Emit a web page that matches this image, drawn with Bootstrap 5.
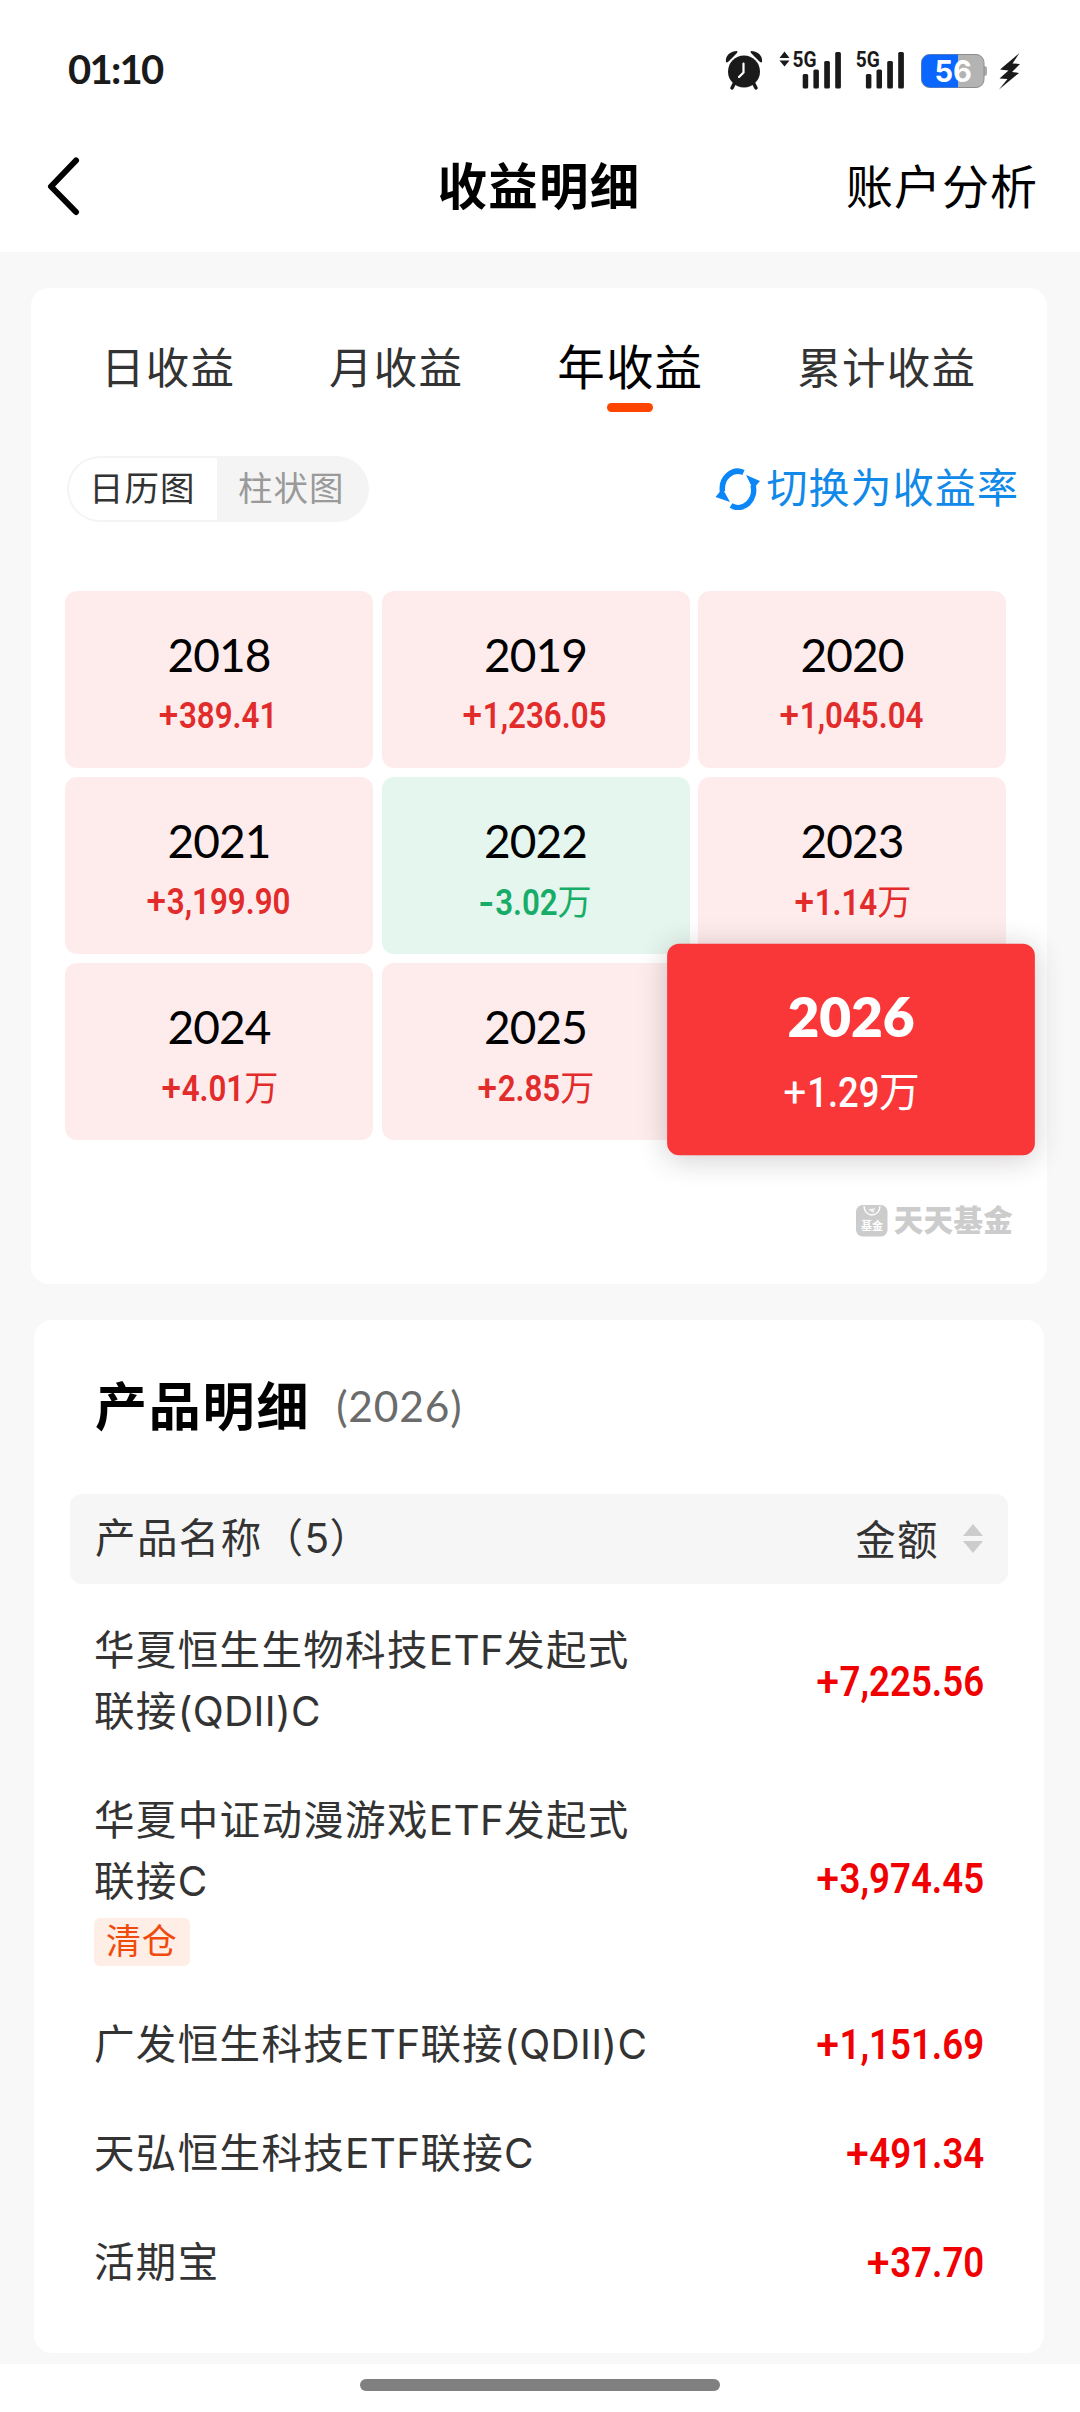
<!DOCTYPE html>
<html lang="zh-CN">
<head>
<meta charset="utf-8">
<meta name="viewport" content="width=device-width, initial-scale=1">
<title>收益明细</title>
<link href="https://cdn.jsdelivr.net/npm/bootstrap@5.3.0/dist/css/bootstrap.min.css" rel="stylesheet">
<style>
body{font-family:Lato,"Noto Sans CJK SC",sans-serif;background:#f8f8f8;color:#333;width:1080px;height:2412px;overflow:hidden}
.statusbar{height:120px;padding:25px 59px 0 68px}
.clock{font:700 40px/88px Lato,sans-serif;color:#1a1a1a;letter-spacing:-1.7px}
.statusbar svg{display:block;flex:none}
.topbar{height:132px;padding:0 42px 0 47px;color:#000}
.topbar .side{width:260px}
.topbar h1{font-size:49.5px;font-weight:700;letter-spacing:1.3px;line-height:131px;margin-left:-7px!important}
.topbar .link{font-size:47px;letter-spacing:1px;line-height:132px}
.panel{background:#fff;border-radius:18px}
.panel-cal{margin:36px 33px 0 31px;height:996px}
.tabs{gap:94px;padding:27px 0 0 70px;height:133px;font-size:43.5px;letter-spacing:1.2px;line-height:104px}
.tabs .on{font-size:47.500px;color:#000;position:relative}
.tabs .on::after{content:"";position:absolute;left:50%;bottom:9px;width:46px;height:9px;margin-left:-23px;border-radius:5px;background:#ff4400}
.switches{padding:35px 28px 0 36px;height:101px}
.seg{width:302px;height:66px;border-radius:33px;background:#f4f4f4;padding:2px;overflow:hidden;font-size:34.500px;letter-spacing:1px;line-height:59px}
.seg .on{width:148px;background:#fff;border-radius:31px 0 0 31px;padding-left:20px}
.seg .off{color:#9a9a9a;padding-left:21px}
.rate{color:#1189e8;font-size:41px;letter-spacing:1.1px;line-height:64px}
.cal{padding:69px 41px 0 34px}
.cal .d-grid{grid-template-columns:repeat(3,308px);grid-auto-rows:177px;gap:9px 8.5px}
.cell{border-radius:12px;background:#feecec;color:#e22b2b;padding-top:37px;text-align:center}
.cell .yr{font-size:46px;line-height:54px;color:#000;letter-spacing:-.9px}
.amt{font-family:Roboto,"Noto Sans CJK SC",sans-serif;font-weight:600;white-space:nowrap;display:inline-block}
.amt .sg{font-weight:500;display:inline-block;transform:scaleX(1.12);margin-right:2px}
.cell .amt{font-size:36px;line-height:44px;margin-top:12px;transform:scaleX(.87)}
.amt i{font:400 35px/40px "Noto Sans CJK SC",sans-serif;display:inline-block;transform:scaleX(1.12);margin-left:2px}
.cell.down{background:#e5f6ee;color:#17ad68}
.cell.down .sg{font-weight:700;transform:scaleX(1.35);margin-right:3px}
.cell.sel{background:#f93739;color:#fff;transform:translate(-1px,-2px) scale(1.194);border-radius:10px;padding-top:34px;box-shadow:0 3px 24px rgba(60,40,40,.24);position:relative}
.cell.sel .yr{color:#fff;font-weight:800;letter-spacing:-.1px}
.cell.sel .amt{font-weight:500;font-size:35px;margin-top:13.5px}
.cell.sel .sg{font-weight:400}
.brandmark{padding:62px 34px 0 0;height:98px;color:#ccc;font-size:29.5px;font-weight:900;letter-spacing:.3px;line-height:36px}
.panel-list{margin:36px 36px 0 34px;height:1033px}
.panel-list h2{font-size:52px;font-weight:700;color:#000;letter-spacing:1.8px;line-height:173px}
.panel-list .hd{padding-left:61px;height:174px}
.hd small.yr-note{font-size:42.5px;color:#6b6b6b;line-height:172px;margin-left:26px;letter-spacing:.8px}
.thead-bar{margin:0 36px;height:90px;border-radius:12px;background:#f6f6f6;padding:0 25px;font-size:40.500px;letter-spacing:1.4px;line-height:87px}
.rows{padding:12px 60px 0 60px}
.item{padding:24px 0;font-size:40.5px;letter-spacing:1.35px;line-height:61px}
.item>div{margin-top:-1px;margin-bottom:1px}
.lat{font-family:Inter,sans-serif;font-size:40.5px;letter-spacing:.3px;line-height:1}
.item .amt{font-size:42px;color:#f00000;letter-spacing:0;transform:scaleX(.872);transform-origin:right center;font-weight:600}
.tag-clear{display:block;width:96px;height:48px;margin:7px 0 -1px;border-radius:6px;background:#ffeee6;color:#f04b0c;font-size:35px;letter-spacing:.8px;line-height:45px;padding-left:12px}
.homebar{margin-top:11px;height:48px;background:#fff;padding-top:15px}
.homebar div{width:360px;height:12px;border-radius:6px;background:#808080}
</style>
</head>
<body class="d-flex flex-column">
<header class="bg-white flex-shrink-0">
  <div class="statusbar d-flex justify-content-between">
    <div class="clock">01:10</div>
    <svg width="296" height="44" viewBox="725 48 296 44" style="margin-top:23px" fill="#1a1a1a">
      <circle cx="744" cy="71.500" r="16"/>
      <path d="M726 62c-1-6 4-11 11-11 1 1 0 2-1 3l-7 7c-1 1-2 2-3 1zM762 62c1-6-4-11-11-11-1 1 0 2 1 3l7 7c1 1 2 2 3 1z"/>
      <path d="M734 84l-2 4M754 84l2 4" stroke="#1a1a1a" stroke-width="3.500" stroke-linecap="round"/>
      <path d="M743.500 63.500v9l-4.500 4.500" fill="none" stroke="#fff" stroke-width="2.200" stroke-linecap="round"/>
      <path d="M779.500 58l5-6.500 5 6.500zM779.500 60.500l5 6 5-6z"/>
      <text x="792.500" y="66.500" font-family="Roboto" font-weight="700" font-size="22" textLength="24" lengthAdjust="spacingAndGlyphs">5G</text>
      <rect x="802.700" y="74" width="5.500" height="14.500" rx="1.500"/><rect x="813.400" y="69.500" width="5.500" height="19" rx="1.500"/><rect x="824.200" y="61" width="5.700" height="27.500" rx="1.500"/><rect x="835.200" y="52" width="5.700" height="36.500" rx="1.500"/>
      <text x="855.800" y="66.500" font-family="Roboto" font-weight="700" font-size="22" textLength="24" lengthAdjust="spacingAndGlyphs">5G</text>
      <rect x="865.900" y="74" width="5.500" height="14.500" rx="1.500"/><rect x="876.500" y="69.500" width="5.500" height="19" rx="1.500"/><rect x="887.200" y="61" width="5.700" height="27.500" rx="1.500"/><rect x="898.200" y="52" width="5.700" height="36.500" rx="1.500"/>
      <path d="M984 66c2 0 3 1 3 2v6c0 1-1 2-3 2z" fill="#aaa"/>
      <rect x="921.500" y="54.500" width="62.500" height="33" rx="8" fill="#b3b3b3" stroke="#8c8c8c"/>
      <path d="M930 54.500h28v33h-28a8.500 8.500 0 0 1-8.500-8.500v-16a8.500 8.500 0 0 1 8.500-8.500z" fill="#0a66ff"/>
      <text x="934.500" y="82" font-family="Inter" font-weight="700" font-size="30" fill="#fff" textLength="37.500" lengthAdjust="spacingAndGlyphs">56</text>
      <path d="M1019.500 53L1000 69.500l8.500 1-9 8 8 .5-8.500 10.500 20-16.500-7-1 8-8-7.500-.5z"/>
    </svg>
  </div>
  <nav class="topbar d-flex align-items-center justify-content-between">
    <div class="side"><svg class="d-block" width="33" height="60" viewBox="0 0 33 60" fill="none" stroke="#000" stroke-width="6" stroke-linecap="round" stroke-linejoin="round"><path d="M29 4.500L4 30.500 29 56"/></svg></div>
    <h1 class="m-0">收益明细</h1>
    <div class="side text-end link">账户分析</div>
  </nav>
</header>

<main class="flex-shrink-0">
  <section class="panel panel-cal">
    <div class="tabs d-flex text-nowrap"><span>日收益</span><span>月收益</span><span class="on">年收益</span><span>累计收益</span></div>
    <div class="switches d-flex justify-content-between">
      <div class="seg d-flex text-nowrap"><div class="on">日历图</div><div class="off">柱状图</div></div>
      <div class="rate d-flex text-nowrap"><svg width="46" height="42" viewBox="0 0 46 42" style="margin:12px 5px 0 0"><g fill="none" stroke="#0b86f7" stroke-width="5.500"><path d="M7.500 23.500A15.500 17.500 0 0 1 28.500 4.500"/><path d="M38 17A15.500 17.500 0 0 1 16 37.500"/></g><path d="M31 7l14 6-7 8zM.5 29l7-8.500L15 34z" fill="#0b86f7"/></svg>切换为收益率</div>
    </div>
    <div class="cal">
      <div class="d-grid">
        <div class="cell"><div class="yr">2018</div><span class="amt"><span class="sg">+</span>389.41</span></div>
        <div class="cell"><div class="yr">2019</div><span class="amt"><span class="sg">+</span>1,236.05</span></div>
        <div class="cell"><div class="yr">2020</div><span class="amt"><span class="sg">+</span>1,045.04</span></div>
        <div class="cell"><div class="yr">2021</div><span class="amt"><span class="sg">+</span>3,199.90</span></div>
        <div class="cell down"><div class="yr">2022</div><span class="amt"><span class="sg">-</span>3.02<i>万</i></span></div>
        <div class="cell"><div class="yr">2023</div><span class="amt"><span class="sg">+</span>1.14<i>万</i></span></div>
        <div class="cell"><div class="yr">2024</div><span class="amt"><span class="sg">+</span>4.01<i>万</i></span></div>
        <div class="cell"><div class="yr">2025</div><span class="amt"><span class="sg">+</span>2.85<i>万</i></span></div>
        <div class="cell sel"><div class="yr">2026</div><span class="amt"><span class="sg">+</span>1.29<i>万</i></span></div>
      </div>
    </div>
    <div class="brandmark d-flex justify-content-end">
      <svg width="32" height="32" viewBox="0 0 32 32" style="margin:3px 6px 0 0"><rect width="31.500" height="31.500" rx="6.500" fill="#ccc"/><path d="M8 1a8 9 0 0 0 16 0" fill="none" stroke="#fff" stroke-width="1.300"/><path d="M12 4.500l7-1.500-1.500 5z" fill="#f2f2f2"/><text x="5" y="25" font-family="Noto Sans CJK SC" font-weight="700" font-size="11" fill="#fff" letter-spacing="0">基金</text></svg>天天基金
    </div>
  </section>

  <section class="panel panel-list">
    <div class="hd d-flex"><h2 class="m-0">产品明细</h2><small class="yr-note">(2026)</small></div>
    <div class="thead-bar d-flex justify-content-between">
      <span>产品名称（<span class="lat">5</span>）</span>
      <span class="d-flex align-items-center">金额<svg width="20" height="30" viewBox="0 0 20 30" style="margin-left:24px" fill="#ccc"><path d="M0 12L10 0l10 12zM0 17h20l-10 12z"/></svg></span>
    </div>
    <div class="rows">
      <div class="item d-flex justify-content-between align-items-center"><div>华夏恒生生物科技<span class="lat">ETF</span>发起式<br>联接<span class="lat">(QDII)C</span></div><span class="amt"><span class="sg">+</span>7,225.56</span></div>
      <div class="item d-flex justify-content-between align-items-center"><div>华夏中证动漫游戏<span class="lat">ETF</span>发起式<br>联接<span class="lat">C</span><span class="tag-clear">清仓</span></div><span class="amt"><span class="sg">+</span>3,974.45</span></div>
      <div class="item d-flex justify-content-between align-items-center"><div>广发恒生科技<span class="lat">ETF</span>联接<span class="lat">(QDII)C</span></div><span class="amt"><span class="sg">+</span>1,151.69</span></div>
      <div class="item d-flex justify-content-between align-items-center"><div>天弘恒生科技<span class="lat">ETF</span>联接<span class="lat">C</span></div><span class="amt"><span class="sg">+</span>491.34</span></div>
      <div class="item d-flex justify-content-between align-items-center"><div>活期宝</div><span class="amt"><span class="sg">+</span>37.70</span></div>
    </div>
  </section>
</main>
<footer class="homebar flex-shrink-0 d-flex justify-content-center"><div></div></footer>
<script src="https://cdn.jsdelivr.net/npm/bootstrap@5.3.0/dist/js/bootstrap.bundle.min.js"></script>
</body>
</html>
